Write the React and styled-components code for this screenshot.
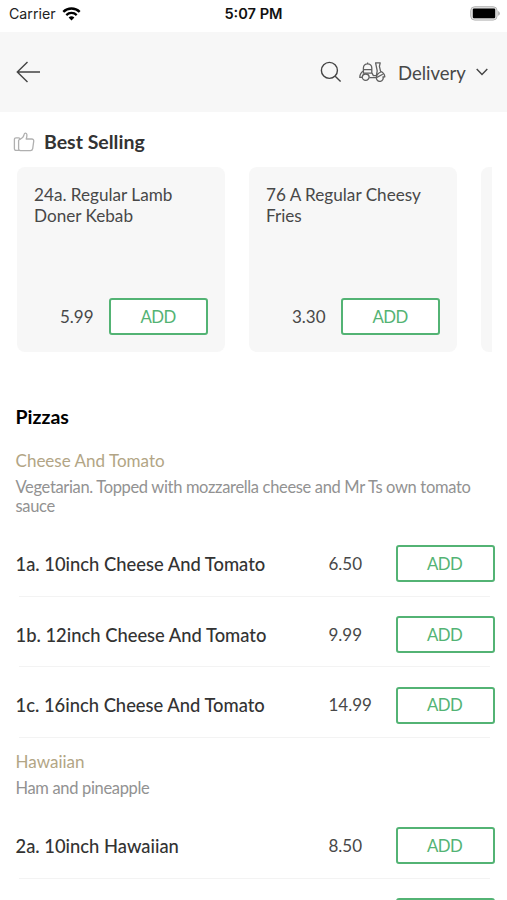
import React from 'react';
import styled, { createGlobalStyle } from 'styled-components';

const GREEN = '#53b374';

const GlobalStyle = createGlobalStyle`
  * {
    box-sizing: border-box;
  }
  body {
    margin: 0;
    background: #fff;
    overflow: hidden;
  }
`;

const Screen = styled.div`
  width: 507px;
  height: 900px;
  overflow: hidden;
  background: #fff;
  color: #484848;
  font-family: Lato, sans-serif;
`;

const StatusBar = styled.div`
  display: grid;
  grid-template-columns: 1fr auto 1fr;
  align-items: center;
  height: 32px;
  padding: 0 7px 5px 9px;
  font-family: Inter, sans-serif;
  font-size: 14.2px;
  color: #222;
`;

const Carrier = styled.div`
  display: flex;
  align-items: center;
  gap: 6px;
`;

const Clock = styled.div`
  margin-right: 2px;
  font-size: 14.6px;
  font-weight: 600;
  color: #111;
`;

const Battery = styled.svg`
  justify-self: end;
`;

const Header = styled.header`
  display: flex;
  align-items: center;
  height: 80px;
  padding: 0 19px 0 16px;
  background: #f7f7f7;
`;

const HeaderActions = styled.div`
  display: flex;
  align-items: center;
  margin-left: auto;
`;

const OrderType = styled.div`
  display: flex;
  align-items: center;
  margin-left: 17px;
  font-size: 18.5px;
  line-height: 24px;
`;

const OrderTypeLabel = styled.span`
  width: 68px;
  margin: 1px 10px 0 12px;
  white-space: nowrap;
`;

const SectionTitle = styled.h2`
  display: flex;
  align-items: center;
  gap: 9px;
  height: 24px;
  margin: 18px 0 13px 13px;
  font-size: 19.5px;
  line-height: 24px;
  font-weight: 700;
  color: #333;
`;

const SectionLabel = styled.span`
  padding-bottom: 1px;
`;

const Carousel = styled.div`
  display: flex;
  gap: 24px;
  margin: 0 15px 0 17px;
  overflow: hidden;
`;

const Card = styled.div`
  display: flex;
  flex: 0 0 208px;
  flex-direction: column;
  justify-content: space-between;
  height: 185px;
  padding: 18px 17px 17px;
  border-radius: 8px;
  background: #f7f7f7;
`;

const CardName = styled.div`
  font-size: 17.15px;
  line-height: 20.5px;
`;

const CardFooter = styled.div`
  display: flex;
  align-items: center;
  justify-content: flex-end;
  gap: 15.5px;
`;

const Price = styled.span`
  font-size: 17px;
  line-height: 24px;
`;

const AddButton = styled.button`
  flex: none;
  width: 99px;
  height: 37px;
  padding: 0 1px 1px 0;
  border: 2px solid ${GREEN};
  border-radius: 3px;
  background: #fff;
  color: ${GREEN};
  font-family: inherit;
  font-size: 16.8px;
  letter-spacing: -0.6px;
`;

const Category = styled.h2`
  margin: 53px 0 0 15.5px;
  font-size: 19.5px;
  line-height: 24px;
  font-weight: 700;
  color: #000;
`;

const GroupHeader = styled.div`
  padding: ${(props) => (props.$first ? '20px' : '12px')} 16px 0 15.5px;
`;

const GroupName = styled.h3`
  margin: 0;
  font-size: 17.05px;
  line-height: 24px;
  font-weight: 400;
  color: #b2a585;
`;

const Description = styled.p`
  margin: 5px 0 0;
  font-size: 16.5px;
  line-height: 19px;
  letter-spacing: -0.34px;
  color: #929292;
`;

const Items = styled.div`
  padding-top: 10px;
`;

const ItemRow = styled.div`
  display: grid;
  grid-template-columns: 313px 67px 99px;
  align-items: center;
  height: 70.7px;
  padding: 5px 0 0 15.5px;
  background: linear-gradient(#f3f3f3, #f3f3f3) 19px 100% / 471px 1px no-repeat;
`;

const ItemName = styled.div`
  font-size: 18.38px;
  line-height: 24px;
  font-weight: 500;
  color: #333;
`;

const bestSelling = [
  { name: '24a. Regular Lamb Doner Kebab', price: '5.99' },
  { name: '76 A Regular Cheesy Fries', price: '3.30' },
];

const groups = [
  {
    name: 'Cheese And Tomato',
    description:
      'Vegetarian. Topped with mozzarella cheese and Mr Ts own tomato sauce',
    items: [
      { name: '1a. 10inch Cheese And Tomato', price: '6.50' },
      { name: '1b. 12inch Cheese And Tomato', price: '9.99' },
      { name: '1c. 16inch Cheese And Tomato', price: '14.99' },
    ],
  },
  {
    name: 'Hawaiian',
    description: 'Ham and pineapple',
    items: [
      { name: '2a. 10inch Hawaiian', price: '8.50' },
      { name: '', price: '' },
    ],
  },
];

const WifiIcon = () => (
  <svg width="19" height="14" viewBox="0 0 19 14" fill="none" stroke="#000">
    <path d="M1.3 4.9a11.7 11.7 0 0 1 16.4 0" strokeWidth="2.4" />
    <path d="M4.3 8.1a7.4 7.4 0 0 1 10.4 0" strokeWidth="2.2" />
    <path d="M6.6 10.6a4.2 4.2 0 0 1 5.8 0L9.5 13.5z" fill="#000" stroke="none" />
  </svg>
);

const BatteryIcon = () => (
  <Battery width="30" height="15" viewBox="0 0 30 15">
    <rect x="0.7" y="0.7" width="26.4" height="13.4" rx="4" fill="#e2e2e2" stroke="#b4b4b4" />
    <rect x="2.8" y="2.6" width="22.4" height="9.6" rx="1.2" fill="#000" />
    <path d="M28.2 5q1.6.8 1.6 2.4t-1.6 2.4z" fill="#a8a8a8" />
  </Battery>
);

const BackIcon = () => (
  <svg width="25" height="22" viewBox="0 0 25 22" fill="none" stroke="#444" strokeWidth="1.4">
    <path d="M11.5 1 1.3 11l10.2 10M1.3 11H24" />
  </svg>
);

const SearchIcon = () => (
  <svg width="22" height="22" viewBox="0 0 22 22" fill="none" stroke="#444" strokeWidth="1.4">
    <circle cx="9.4" cy="9.4" r="8" />
    <path d="m15.2 15.2 5.4 5.4" />
  </svg>
);

const ScooterIcon = () => (
  <svg
    width="27"
    height="20"
    viewBox="0 0 27 20"
    fill="none"
    stroke="#606060"
    strokeWidth="1.3"
    strokeLinejoin="round"
  >
    <path d="M4.4 7.6V6a4.2 4.2 0 0 1 8.4 0v5.2M8.6 1.8V.5M4.4 7.6h8.400M4.400 6v5.200h9" />
    <path d="M4.400 9C2 10.400.8 12.600.8 15.400h2.400M10.400 15.600h6.800c.6-2.800 2-4.600 4.600-5.600M13 11.200l1.400 2.400h3l.8-4.800-1.600-8h4.600l-.8 3.600 1.200 5c2.400 1 4 2.700 4.200 5.400l-1.800.4" />
    <path d="M3.200 14.800a3.500 3.500 0 1 0 7 0c-.4-1.700-1.800-2.800-3.500-2.800s-3.100 1.100-3.500 2.800z" />
    <path d="M17.400 15.600a3.400 3.400 0 1 0 6.400-1.200M17.400 15.600l6.400-3.400" />
  </svg>
);

const ChevronIcon = () => (
  <svg width="12" height="8" viewBox="0 0 12 8" fill="none" stroke="#444" strokeWidth="1.4">
    <path d="m.7 1 5.3 5.5L11.3 1" />
  </svg>
);

const ThumbIcon = () => (
  <svg
    width="22"
    height="20"
    viewBox="0 0 22 20"
    fill="none"
    stroke="#b0b0b0"
    strokeWidth="1.3"
    strokeLinejoin="round"
  >
    <path d="M7.2 18.4H3a1.6 1.6 0 0 1-1.6-1.6V7.4A1.6 1.6 0 0 1 3 5.8h2.6a1.4 1.4 0 0 1 1.4 1.4" />
    <path d="M5.6 8.4V17c0 1 .7 1.6 1.6 1.6h10.2c1.4 0 2.1-.7 2.3-2l1-7.2c.2-1.5-.5-2.4-2-2.4h-5.5c.5-1.3.8-2.7.7-4.2-.1-2.3-2.5-2.3-2.8-.3C10.7 4.8 9.4 6.3 7 7.3 6 7.6 5.6 7.7 5.6 8.4z" />
  </svg>
);

const App = () => (
  <Screen>
    <GlobalStyle />
    <StatusBar>
      <Carrier>
        Carrier
        <WifiIcon />
      </Carrier>
      <Clock>5:07 PM</Clock>
      <BatteryIcon />
    </StatusBar>
    <Header>
      <BackIcon />
      <HeaderActions>
        <SearchIcon />
        <OrderType>
          <ScooterIcon />
          <OrderTypeLabel>Delivery</OrderTypeLabel>
          <ChevronIcon />
        </OrderType>
      </HeaderActions>
    </Header>
    <SectionTitle>
      <ThumbIcon />
      <SectionLabel>Best Selling</SectionLabel>
    </SectionTitle>
    <Carousel>
      {bestSelling.map((item) => (
        <Card key={item.name}>
          <CardName>{item.name}</CardName>
          <CardFooter>
            <Price>{item.price}</Price>
            <AddButton>ADD</AddButton>
          </CardFooter>
        </Card>
      ))}
      <Card />
    </Carousel>
    <Category>Pizzas</Category>
    {groups.map((group, i) => (
      <section key={group.name}>
        <GroupHeader $first={i === 0}>
          <GroupName>{group.name}</GroupName>
          <Description>{group.description}</Description>
        </GroupHeader>
        <Items>
          {group.items.map((item) => (
            <ItemRow key={item.name}>
              <ItemName>{item.name}</ItemName>
              <Price>{item.price}</Price>
              <AddButton>{item.name && 'ADD'}</AddButton>
            </ItemRow>
          ))}
        </Items>
      </section>
    ))}
  </Screen>
);

export default App;
